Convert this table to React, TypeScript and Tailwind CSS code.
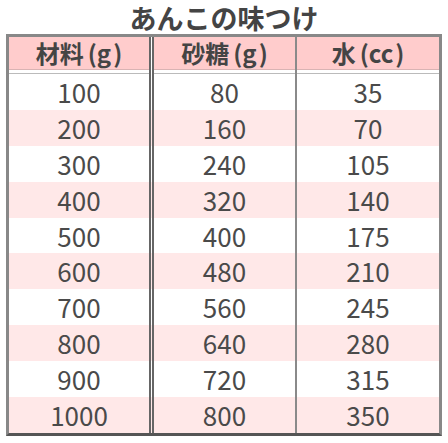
import React from "react";

const rows = [
  [100, 80, 35],
  [200, 160, 70],
  [300, 240, 105],
  [400, 320, 140],
  [500, 400, 175],
  [600, 480, 210],
  [700, 560, 245],
  [800, 640, 280],
  [900, 720, 315],
  [1000, 800, 350],
];

const headers = [
  ["材料", "g"],
  ["砂糖", "g"],
  ["水", "cc"],
];

export default function App() {
  return (
    <div
      className="w-[448px] h-[443px] bg-white px-[6px] text-[#4a4a4a]"
      style={{ fontFamily: '"Noto Sans CJK JP", "Noto Sans", sans-serif' }}
    >
      <h1 className="pt-[2px] text-center text-[27px] leading-[32px] font-bold text-[#444]">
        あんこの味つけ
      </h1>
      <div className="border-[3px] border-[#888] border-b-[#555]">
        {/* header */}
        <div className="flex">
          {headers.map(([label, unit], i) => (
            <React.Fragment key={label}>
              <div className={i === 0 ? "w-[140px]" : i === 1 ? "w-[141px]" : "flex-1"}>
                <div className="h-[33px] bg-[#ffcccc] border-b border-[#d9b3b3] flex items-center justify-center text-[24px] font-bold leading-none text-[#444]">
                  {label}
                  <span className="pl-[4px]">(</span>
                  {unit}
                  <span className="pl-[2px]">)</span>
                </div>
                <div className="h-[4px] bg-white border-b border-[#bbb]" />
              </div>
              {i === 0 && <div className="w-[5px] border-x-2 border-[#666]" />}
              {i === 1 && <div className="w-[2px] bg-[#8a8a8a]" />}
            </React.Fragment>
          ))}
        </div>
        {/* rows */}
        {rows.map((r, ri) => (
          <div
            key={ri}
            className={`flex h-[35.9px] ${ri % 2 === 1 ? "bg-[#ffe8e8]" : "bg-white"}`}
          >
            <div className="w-[140px] flex items-center justify-center text-[26px] leading-none">
              {r[0]}
            </div>
            <div className="w-[5px] border-x-2 border-[#666]" />
            <div className="w-[141px] flex items-center justify-center text-[26px] leading-none">
              {r[1]}
            </div>
            <div className="w-[2px] bg-[#8a8a8a]" />
            <div className="flex-1 flex items-center justify-center text-[26px] leading-none">
              {r[2]}
            </div>
          </div>
        ))}
      </div>
    </div>
  );
}
